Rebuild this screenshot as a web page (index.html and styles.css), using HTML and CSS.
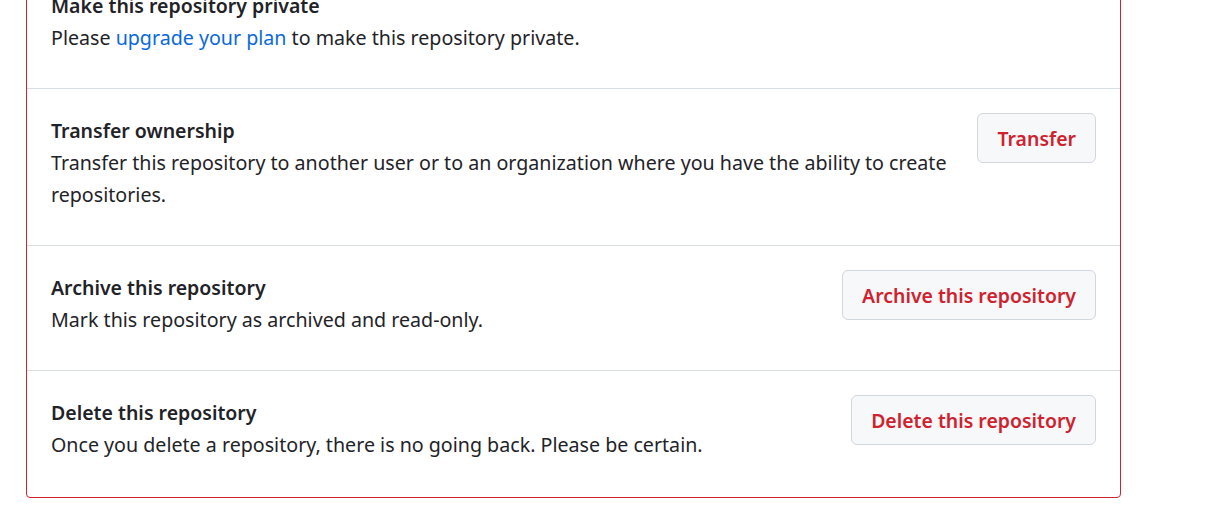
FILE: index.html
```html
<!DOCTYPE html>
<html lang="en">
<head>
<meta charset="utf-8">
<title>Danger Zone</title>
<link rel="stylesheet" href="styles.css">
</head>
<body>
<div class="danger-box">
  <div class="row">
    <div class="info">
      <strong class="title">Make this repository private</strong>
      <p class="desc">Please <a href="#" class="link">upgrade your plan</a> to make this repository private.</p>
    </div>
  </div>
  <div class="row">
    <div class="info">
      <strong class="title">Transfer ownership</strong>
      <p class="desc">Transfer this repository to another user or to an organization where you have the ability to create repositories.</p>
    </div>
    <button class="btn">Transfer</button>
  </div>
  <div class="row">
    <div class="info">
      <strong class="title">Archive this repository</strong>
      <p class="desc">Mark this repository as archived and read-only.</p>
    </div>
    <button class="btn">Archive this repository</button>
  </div>
  <div class="row">
    <div class="info">
      <strong class="title">Delete this repository</strong>
      <p class="desc">Once you delete a repository, there is no going back. Please be certain.</p>
    </div>
    <button class="btn">Delete this repository</button>
  </div>
</div>
</body>
</html>
```
FILE: styles.css
```css
html, body {
  margin: 0;
  padding: 0;
  background: #ffffff;
}
body {
  font-family: "Noto Sans", "Open Sans", sans-serif;
  font-size: 19.65px;
  line-height: 32px;
  color: #1f2328;
}
.danger-box {
  width: 1095px;
  box-sizing: border-box;
  margin: -37px 0 0 26px;
  border: 1px solid #cf222e;
  border-radius: 4px;
}
.row {
  display: flex;
  align-items: flex-start;
  gap: 24px;
  padding: 24px 24px;
  border-top: 1px solid #d8dee4;
}
.row:first-child {
  border-top: none;
}
.row:last-child {
  padding-bottom: 26px;
}
.info {
  flex: 1 1 auto;
  min-width: 0;
  padding-top: 2px;
}
.title {
  display: block;
  font-size: 19.5px;
  font-weight: 600;
}
.desc {
  margin: 0 0 10px 0;
}
.link {
  color: #0969da;
  text-decoration: none;
}
.btn {
  flex: none;
  height: 50px;
  padding: 0 19px;
  font-family: inherit;
  font-size: 19.45px;
  font-weight: 600;
  color: #cf222e;
  background: #f6f8fa;
  border: 1px solid #d0d7de;
  border-radius: 6px;
  cursor: pointer;
}
```
